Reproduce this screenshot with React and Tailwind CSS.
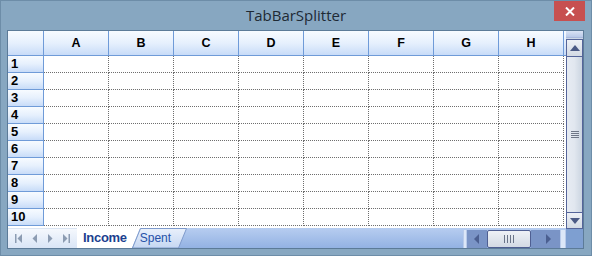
import React from "react";

const cols = ["A", "B", "C", "D", "E", "F", "G", "H"];
const rows = [1, 2, 3, 4, 5, 6, 7, 8, 9, 10];

function HeaderCell({ children, className = "" }) {
  return (
    <div
      className={`bg-gradient-to-b from-[#f7fbff] via-[#e6f0fd] to-[#c8dcf8] border-r border-b border-[#6f9bd8] font-bold text-black ${className}`}
    >
      {children}
    </div>
  );
}

function Grid() {
  return (
    <div className="h-[195px] flex bg-white overflow-hidden">
      <div className="grid grid-cols-[36px_repeat(8,65px)] grid-rows-[25px_repeat(10,17px)] text-[12px] [font-family:'Liberation_Sans',Arial,sans-serif]">
        <HeaderCell />
        {cols.map((c) => (
          <HeaderCell key={c} className="flex items-center justify-center text-[12.5px]">
            {c}
          </HeaderCell>
        ))}
        {rows.map((r) => (
          <React.Fragment key={r}>
            <HeaderCell className="flex items-center pl-[3px] text-[13px]">{r}</HeaderCell>
            {cols.map((c) => (
              <div
                key={c}
                className="border-r border-b border-dotted border-[#6e6e6e] bg-white"
              />
            ))}
          </React.Fragment>
        ))}
      </div>
      <div className="flex-1 flex flex-col">
        <div className="h-[25px] bg-gradient-to-b from-[#f7fbff] to-[#c8dcf8] border-b border-[#6f9bd8]" />
      </div>
    </div>
  );
}

function NavIcon({ type }) {
  const fill = "#8c9cb2";
  return (
    <svg width="8" height="9" viewBox="0 0 8 9">
      {type === "first" && (
        <>
          <rect x="0" y="0" width="1.5" height="9" fill={fill} />
          <polygon points="7,0 7,9 2.5,4.5" fill={fill} />
        </>
      )}
      {type === "prev" && <polygon points="6,0 6,9 1.5,4.5" fill={fill} />}
      {type === "next" && <polygon points="2,0 2,9 6.5,4.5" fill={fill} />}
      {type === "last" && (
        <>
          <polygon points="1,0 1,9 5.5,4.5" fill={fill} />
          <rect x="6.5" y="0" width="1.5" height="9" fill={fill} />
        </>
      )}
    </svg>
  );
}

function TabBar() {
  return (
    <div className="h-[22px] bg-white pt-[2px] flex">
      <div className="w-[69px] h-[20px] bg-gradient-to-b from-[#f5f8fd] to-[#d9e5f6] border-t border-[#dbe5f3] flex items-center justify-around px-[3px]">
        <NavIcon type="first" />
        <NavIcon type="prev" />
        <NavIcon type="next" />
        <NavIcon type="last" />
      </div>
      <div className="relative w-[386px] h-[20px] bg-gradient-to-b from-[#b7cdf0] to-[#93b2e3]">
        <svg className="absolute inset-0" width="386" height="20" viewBox="0 0 386 20">
          <defs>
            <linearGradient id="spentg" x1="0" y1="0" x2="0" y2="1">
              <stop offset="0" stopColor="#e9f0fb" />
              <stop offset="1" stopColor="#c5d7f2" />
            </linearGradient>
          </defs>
          <polygon points="0,0 63,0 55,20 0,20" fill="#ffffff" />
          <polygon points="55.5,20 63.5,0.5 109.5,0.5 101.5,20" fill="url(#spentg)" stroke="#7f9bcc" strokeWidth="1" />
        </svg>
        <div className="relative flex h-full items-center [font-family:'Liberation_Sans',Arial,sans-serif]">
          <span className="ml-[6px] text-[13px] font-bold text-[#1c3f8f] tracking-[-0.3px]">Income</span>
          <span className="ml-[13px] text-[12px] text-[#2651a8]">Spent</span>
        </div>
      </div>
      <div className="w-[103px] h-[20px] pt-[2px] bg-gradient-to-b from-[#b7cdf0] to-[#93b2e3]">
        <div className="h-[18px] flex">
          <div className="w-[4px] bg-[#dce7f8] border-x border-[#b9cbea]" />
          <div className="w-[20px] bg-[#7a94c6] flex items-center justify-center">
            <svg width="6" height="10" viewBox="0 0 6 10">
              <polygon points="5,0 5,10 0,5" fill="#4b5f90" />
            </svg>
          </div>
          <div className="w-[44px] bg-gradient-to-b from-[#eef1f6] to-[#d3dae4] border border-[#4f5f92] rounded-[2px] flex items-center justify-center gap-[2px]">
            <div className="w-px h-[8px] bg-[#6a7488]" />
            <div className="w-px h-[8px] bg-[#6a7488]" />
            <div className="w-px h-[8px] bg-[#6a7488]" />
            <div className="w-px h-[8px] bg-[#6a7488]" />
          </div>
          <div className="w-[29px] bg-[#7a94c6] flex items-center justify-end pr-[9px]">
            <svg width="6" height="10" viewBox="0 0 6 10">
              <polygon points="1,0 1,10 6,5" fill="#4b5f90" />
            </svg>
          </div>
          <div className="w-[6px] bg-[#dce7f8] border-x border-[#b9cbea]" />
        </div>
      </div>
    </div>
  );
}

function VScroll() {
  return (
    <div className="w-[17px] flex flex-col">
      <div className="h-[198px] flex flex-col bg-[#cdd8e6]">
        <div className="h-[7px] bg-gradient-to-b from-[#d9e3f4] to-[#b9c9e8] border-b border-[#a9b9dd]" />
        <div className="h-[18px] mt-px border border-[#55659a] bg-gradient-to-b from-[#eef1f6] to-[#d3dae4] flex items-center justify-center">
          <svg width="10" height="6" viewBox="0 0 10 6">
            <polygon points="0,6 10,6 5,0" fill="#4b5a85" />
          </svg>
        </div>
        <div className="flex-1 border-x border-[#55659a] bg-gradient-to-r from-[#e7ecf3] via-[#e1e7ef] to-[#cbd5e1] flex flex-col items-center justify-center gap-[1px]">
          <div className="w-[8px] h-px bg-[#6f7787]" />
          <div className="w-[8px] h-px bg-[#6f7787]" />
          <div className="w-[8px] h-px bg-[#6f7787]" />
          <div className="w-[8px] h-px bg-[#6f7787]" />
        </div>
        <div className="h-[17px] border border-[#55659a] bg-gradient-to-b from-[#eef1f6] to-[#d3dae4] flex items-center justify-center">
          <svg width="10" height="6" viewBox="0 0 10 6">
            <polygon points="0,0 10,0 5,6" fill="#4b5a85" />
          </svg>
        </div>
      </div>
      <div className="flex-1 bg-[#7e9fd1]" />
    </div>
  );
}

export default function App() {
  return (
    <div className="relative w-[592px] h-[256px] bg-[#87a7c1] border border-[#6d8da8] overflow-hidden">
      <div className="h-[29px] flex items-center justify-center text-[15px] text-[#1e2a35] [font-family:'Open_Sans','Noto_Sans',sans-serif]">
        TabBarSplitter
      </div>
      <div className="absolute right-[6px] top-0 w-[31px] h-[20px] bg-[#c75050] flex items-center justify-center">
        <svg width="10" height="9" viewBox="0 0 10 9">
          <path d="M1 0.5 L9 8.5 M9 0.5 L1 8.5" stroke="#ffffff" strokeWidth="2" />
        </svg>
      </div>
      <div className="ml-[6px] mr-[7px] h-[219px] border border-[#5c7b98] bg-white flex">
        <div className="w-[558px] flex flex-col">
          <Grid />
          <TabBar />
        </div>
        <VScroll />
      </div>
    </div>
  );
}
